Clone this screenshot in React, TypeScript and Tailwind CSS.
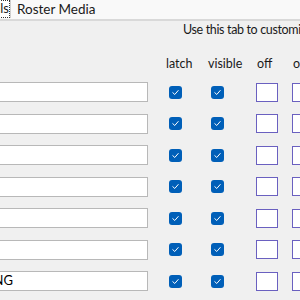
function Check() {
  return (
    <div className="flex h-[13px] w-[13px] shrink-0 items-center justify-center rounded-[3px] bg-[#005fb8]">
      <svg width="9" height="9" viewBox="0 0 10 10" fill="none">
        <path d="M2 5.2 L4.2 7.2 L8 2.8" stroke="white" strokeWidth="1.1" strokeLinecap="round" strokeLinejoin="round" />
      </svg>
    </div>
  );
}

const rows = ["", "", "", "", "", "", "WARNING"];

export default function App() {
  return (
    <div
      className="h-[300px] w-[300px] overflow-hidden bg-[#f0f0f0] text-[12.5px] text-[#1a1a1a]"
      style={{ fontFamily: 'Lato, "Noto Sans", sans-serif' }}
    >
      <div className="flex h-[21px] items-start border-b-2 border-[#d9d9d9] bg-[#f9f9f9]">
        <div className="flex h-[18px] w-[11px] justify-end overflow-hidden border-r border-[#d0d0d0] bg-white">
          <span className="whitespace-nowrap border border-dotted border-[#333] text-[13px] leading-[14px]">
            Details
          </span>
        </div>
        <div className="flex h-[18px] items-center whitespace-nowrap pl-[6px] pr-[8px] text-[13.5px]">
          Roster Media
        </div>
      </div>

      <div className="pl-[183px] pt-[1px] text-[12.5px] leading-[16px] tracking-[-0.35px] whitespace-nowrap">
        Use this tab to customize the fields
      </div>

      <div className="mt-[18px] flex leading-[16px] whitespace-nowrap">
        <div className="w-[166px] shrink-0" />
        <div className="w-[42px] shrink-0">latch</div>
        <div className="w-[49px] shrink-0">visible</div>
        <div className="w-[36px] shrink-0">off</div>
        <div className="w-[36px] shrink-0">on</div>
      </div>

      <div className="mt-[10px] flex flex-col gap-[11.5px]">
        {rows.map((text, i) => (
          <div key={i} className="flex h-[20px] items-center">
            <div className="flex h-[20px] w-[148px] shrink-0 items-center border-y border-r border-[#b8b8b8] bg-white">
              <div className="flex w-[13px] justify-end overflow-hidden whitespace-nowrap text-[13px] text-black">
                {text}
              </div>
            </div>
            <div className="ml-[21px]">
              <Check />
            </div>
            <div className="ml-[29px]">
              <Check />
            </div>
            <div className="ml-[32px] h-[19px] w-[22px] shrink-0 border-[1.5px] border-[#6a60c0] bg-white" />
            <div className="ml-[14px] h-[19px] w-[22px] shrink-0 border-[1.5px] border-[#6a60c0] bg-white" />
          </div>
        ))}
      </div>
    </div>
  );
}
